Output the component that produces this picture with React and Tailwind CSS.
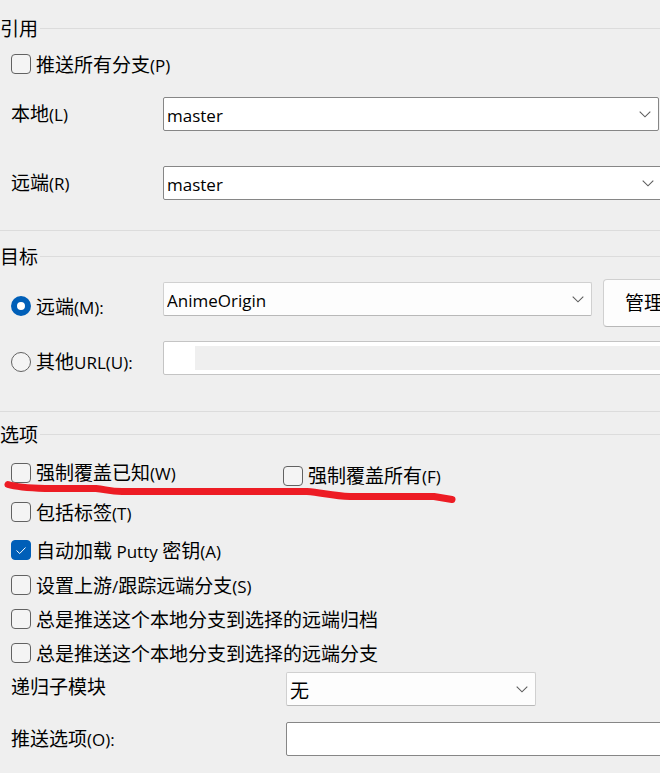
import React, { useId, useState } from "react";
import clsx from "clsx";

const latin = "font-['Open_Sans','Noto_Sans_CJK_SC',sans-serif]";

/* Chinese runs are set at 19px, Latin runs at 17px. */
function Caption({ text, hint, tail }) {
  return (
    <span className="whitespace-nowrap pt-0.5 leading-6">
      {text}
      {hint && <span className="text-[17px]">{hint}</span>}
      {tail}
    </span>
  );
}

function Heading({ children }) {
  return (
    <div className="flex h-6 items-center gap-[2px]">
      <h2 className="whitespace-nowrap pt-0.5 leading-6">{children}</h2>
      <div className="h-px flex-1 bg-[#dcdcdc]" />
    </div>
  );
}

function Check({ text, hint, tail, initial = false, className }) {
  const [on, setOn] = useState(initial);
  return (
    <label className={clsx("flex items-center gap-[5px]", className)}>
      <span className="relative flex size-5 shrink-0">
        <input
          type="checkbox"
          checked={on}
          onChange={(e) => setOn(e.target.checked)}
          className="size-5 appearance-none rounded border border-[#626262] bg-[#f4f4f4] checked:border-[#005fb8] checked:bg-[#005fb8]"
        />
        {on && (
          <svg viewBox="0 0 20 20" className="pointer-events-none absolute inset-0 size-5" fill="none" stroke="#fff">
            <path d="M5.5 10.5 8.7 13.5 14.5 7.5" />
          </svg>
        )}
      </span>
      <Caption text={text} hint={hint} tail={tail} />
    </label>
  );
}

function Radio({ text, hint, value, target, onPick }) {
  return (
    <label className="flex w-[152px] shrink-0 items-center gap-[5px]">
      <input
        type="radio"
        name="target"
        checked={target === value}
        onChange={() => onPick(value)}
        className="size-5 shrink-0 appearance-none rounded-full border border-[#626262] bg-[#f4f4f4] checked:border-[6px] checked:border-[#005fb8] checked:bg-white"
      />
      <Caption text={text} hint={hint} />
    </label>
  );
}

function Combo({ id, label, options, editable, className, cjk }) {
  return (
    <div className={clsx("relative h-[34px]", className)}>
      <select
        id={id}
        aria-label={label}
        className={clsx(
          "h-full w-full appearance-none rounded-xs border pt-[3px] pl-[3px]",
          cjk ? "text-[19px]" : "text-[17px]",
          editable ? "border-[#868686] bg-white" : "border-[#d0d0d0] border-b-[#b8b8b8] bg-[#fdfdfd]"
        )}
      >
        {options.map((o) => (
          <option key={o}>{o}</option>
        ))}
      </select>
      <svg
        viewBox="0 0 12 7"
        className="pointer-events-none absolute top-[14px] right-2 h-[7px] w-3"
        fill="none"
        stroke="#5c5c5c"
        strokeWidth="1.1"
      >
        <path d="M.7.7 6 5.8 11.3.7" />
      </svg>
    </div>
  );
}

export default function App() {
  const id = useId();
  const [target, setTarget] = useState("remote");
  return (
    <main className={clsx("min-h-screen overflow-hidden bg-[#efefef] pt-4 text-[19px] leading-6 text-black", latin)}>
      <section className="border-b border-[#dcdcdc] pb-[30px]">
        <Heading>引用</Heading>
        <div className="pt-3 pl-[11px]">
          <Check text="推送所有分支" hint="(P)" className="h-6" />
          <div className="mt-5 flex items-center pt-px pr-px">
            <label htmlFor={id + "l"} className="w-[152px] shrink-0">
              <Caption text="本地" hint="(L)" />
            </label>
            <Combo id={id + "l"} options={["master"]} editable className="flex-1" />
          </div>
          <div className="mt-[35px] -mr-[2px] flex items-center">
            <label htmlFor={id + "r"} className="w-[152px] shrink-0">
              <Caption text="远端" hint="(R)" />
            </label>
            <Combo id={id + "r"} options={["master"]} editable className="flex-1" />
          </div>
        </div>
      </section>

      <section className="border-b border-[#dcdcdc] pt-[13px] pb-9">
        <Heading>目标</Heading>
        <div className="pt-[11px] pl-[11px]">
          <div className="-mr-16 flex items-start">
            <div className="flex h-[54px] items-center">
              <Radio text="远端" hint="(M):" value="remote" target={target} onPick={setTarget} />
            </div>
            <Combo label="远端" options={["AnimeOrigin"]} className="mt-[3px] flex-1" />
            <button
              type="button"
              className="ml-[11px] h-12 w-[121px] rounded border border-[#d0d0d0] border-b-[#b8b8b8] bg-[#fdfdfd] pl-[21px] text-left"
            >
              管理
            </button>
          </div>
          <div className="-mr-[2px] flex items-end pt-2">
            <Radio text="其他" hint="URL(U):" value="url" target={target} onPick={setTarget} />
            <div className="flex h-[34px] flex-1 rounded-xs border border-[#c4c4c4] bg-white py-1 pl-[31px]">
              <input
                type="text"
                aria-label="其他URL"
                disabled={target !== "url"}
                className="h-full w-full bg-[#efefef] text-[17px] outline-none"
              />
            </div>
          </div>
        </div>
      </section>

      <section className="pt-[10px] pb-4">
        <Heading>选项</Heading>
        <div className="relative pt-[6px] pl-[11px]">
          <div className="flex h-10 items-start">
            <Check text="强制覆盖已知" hint="(W)" className="mt-[7px] w-[272px]" />
            <Check text="强制覆盖所有" hint="(F)" className="mt-[10px]" />
          </div>
          <Check text="包括标签" hint="(T)" className="h-10" />
          <Check text="自动加载" hint=" Putty " tail={<>密钥<span className="text-[17px]">(A)</span></>} initial className="h-9" />
          <Check text="设置上游" hint="/" tail={<>跟踪远端分支<span className="text-[17px]">(S)</span></>} className="h-[34px]" />
          <Check text="总是推送这个本地分支到选择的远端归档" className="h-[34px]" />
          <Check text="总是推送这个本地分支到选择的远端分支" className="h-[34px]" />
          <svg
            viewBox="0 0 460 30"
            className="pointer-events-none absolute top-[31px] left-0 h-[30px] w-[460px]"
            fill="none"
            stroke="#ed1c24"
            strokeWidth="7"
            strokeLinecap="round"
            strokeLinejoin="round"
          >
            <path d="M8 7.500C18 10.500 30 11 45 11.500H96C106 12.500 110 14.500 122 14.500H307C322 15.500 332 19 350 19.500H434L452 22.500" />
          </svg>
        </div>
        <div className="flex items-start pt-[2px] pl-[11px]">
          <label htmlFor={id + "s"} className="flex h-7 w-[275px] shrink-0 items-center">
            <Caption text="递归子模块" />
          </label>
          <Combo id={id + "s"} options={["无"]} cjk className="w-[250px]" />
        </div>
        <div className="-mr-[2px] flex items-center pt-4 pl-[11px]">
          <label htmlFor={id + "o"} className="w-[275px] shrink-0">
            <Caption text="推送选项" hint="(O):" />
          </label>
          <input
            id={id + "o"}
            type="text"
            className="h-[34px] min-w-0 flex-1 rounded-xs border border-[#868686] bg-white px-1 text-[17px] outline-none"
          />
        </div>
      </section>
    </main>
  );
}
